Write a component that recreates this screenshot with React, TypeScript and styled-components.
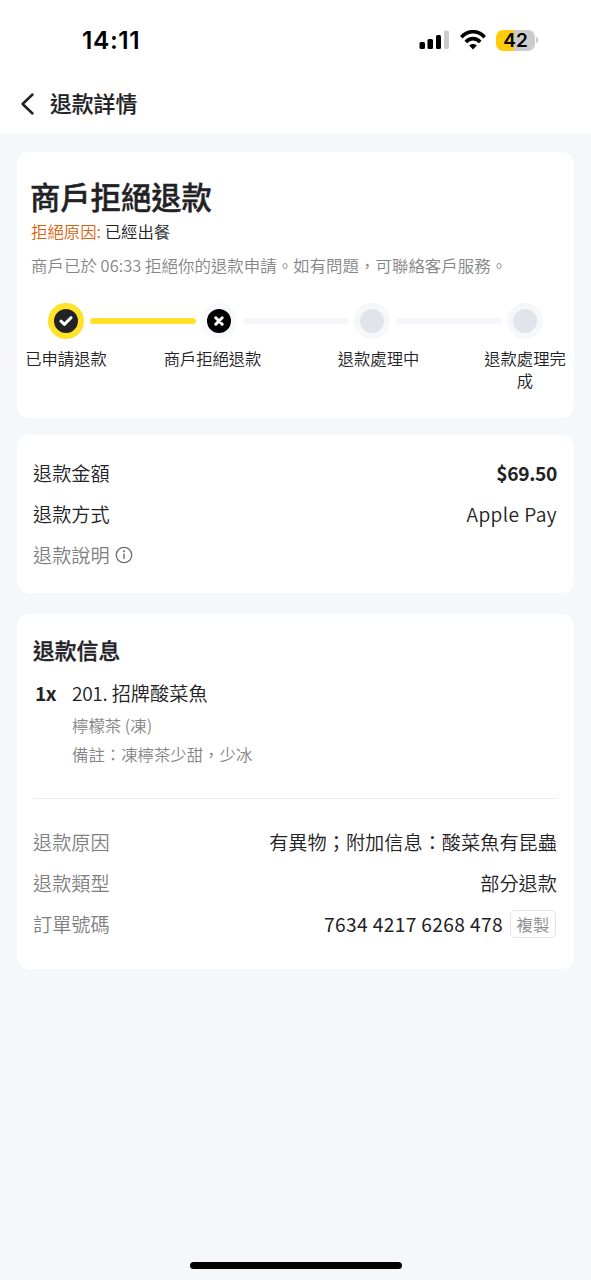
import React from "react";
import styled, { createGlobalStyle } from "styled-components";

const GlobalStyle = createGlobalStyle`
  * { box-sizing: border-box; }
  html, body { margin: 0; padding: 0; background: #f5f7fb; }
  body {
    font-family: "Noto Sans CJK TC", "Noto Sans", sans-serif;
    font-weight: 350;
    color: #222225;
  }
`;

const Screen = styled.div`
  width: 591px;
  height: 1280px;
  display: flex;
  flex-direction: column;
  background: #f5f7fb;
  overflow: hidden;
`;

const StatusBar = styled.div`
  height: 80px;
  flex: none;
  background: #fff;
  display: flex;
  align-items: center;
  justify-content: space-between;
  padding: 0 53px 0 82px;
`;

const Clock = styled.span`
  font-family: Inter, sans-serif;
  font-weight: 600;
  font-size: 24.5px;
  letter-spacing: 0.6px;
  line-height: 30px;
  color: #000;
`;

const StatusIcons = styled.div`
  display: flex;
  align-items: center;
`;

const SignalIcon = styled.svg`
  display: block;
  margin-right: 10px;
`;

const WifiIcon = styled.svg`
  display: block;
  margin-right: 10px;
`;

const Battery = styled.div`
  width: 39px;
  height: 21px;
  border-radius: 7px;
  background: linear-gradient(90deg, #ffcc0a 0 18px, #cbcbcd 18px);
  color: #000;
  font: 600 19px/21px Inter, sans-serif;
  text-align: center;
`;

const BatteryTip = styled.div`
  width: 2px;
  height: 6px;
  margin-left: 1px;
  border-radius: 0 2px 2px 0;
  background: #cbcbcd;
`;

const NavBar = styled.header`
  height: 54px;
  flex: none;
  background: #fff;
  display: flex;
  align-items: center;
  padding: 0 0 6px 20px;
`;

const BackIcon = styled.svg`
  display: block;
  margin-right: 14px;
`;

const NavTitle = styled.h1`
  margin: -2px 0 0;
  font-size: 21.8px;
  line-height: 32px;
  font-weight: 500;
  -webkit-text-stroke: 0.2px currentColor;
`;

const Content = styled.main`
  flex: 1;
  padding: 18px 17px 0;
`;

const Card = styled.section<{ $height: number; $gap?: number }>`
  height: ${(p) => p.$height}px;
  margin-bottom: ${(p) => p.$gap ?? 0}px;
  background: #fff;
  border-radius: 12px;
`;

const StatusHeading = styled.h2`
  margin: 0;
  padding: 24px 0 0 13px;
  font-size: 30.3px;
  line-height: 40px;
  font-weight: 500;
  -webkit-text-stroke: 0.45px currentColor;
`;

const Reason = styled.p`
  margin: 3px 0 0 14px;
  font-size: 16.4px;
  line-height: 24px;
`;

const ReasonLabel = styled.span`
  color: #d9640f;
`;

const Description = styled.p`
  margin: 10px 0 0 14px;
  font-size: 16.4px;
  letter-spacing: 0.07px;
  line-height: 24px;
  color: #858587;
  white-space: nowrap;
`;

const Track = styled.div`
  display: flex;
  align-items: center;
  margin: 26px 0 0 31px;
`;

const Dot = styled.div<{ $ring: string; $fill: string }>`
  width: 36px;
  height: 36px;
  flex: none;
  border-radius: 50%;
  border: 6px solid ${(p) => p.$ring};
  background: ${(p) => p.$fill};
  display: flex;
  align-items: center;
  justify-content: center;
`;

const Connector = styled.div<{ $color: string }>`
  width: 106px;
  height: 6px;
  margin: 0 5px 0 6px;
  border-radius: 3px;
  flex: none;
  background: ${(p) => p.$color};
`;

const StepLabels = styled.div`
  display: grid;
  grid-template-columns: 98px 195px 137px 1fr;
  margin-top: 8px;
`;

const StepLabel = styled.div`
  font-size: 16.3px;
  line-height: 22px;
  text-align: center;
`;

const LastStepLabel = styled(StepLabel)`
  width: 84px;
  margin-left: 36px;
`;

const Rows = styled.div<{ $top: number }>`
  padding: ${(p) => p.$top}px 17px 0 16px;
`;

const Row = styled.div<{ $muted?: boolean }>`
  height: 41px;
  display: flex;
  align-items: center;
  justify-content: space-between;
  font-size: 19.2px;
  line-height: 28px;
  color: ${(p) => (p.$muted ? "#7f7f82" : "#222225")};
`;

const Value = styled.span<{ $weight?: number; $spacing?: number }>`
  color: #222225;
  font-weight: ${(p) => p.$weight ?? 350};
  letter-spacing: ${(p) => p.$spacing ?? 0}px;
`;

const InfoLabel = styled.span`
  display: flex;
  align-items: center;
  gap: 5px;
`;

const SectionTitle = styled.h3`
  margin: 0;
  padding: 20px 0 0 16px;
  font-size: 21.8px;
  line-height: 32px;
  font-weight: 500;
  -webkit-text-stroke: 0.35px currentColor;
`;

const Item = styled.div`
  display: grid;
  grid-template-columns: 37px 1fr;
  padding: 13px 0 0 18px;
`;

const Quantity = styled.span`
  font-size: 19.2px;
  line-height: 28px;
  font-weight: 700;
  letter-spacing: -0.6px;
`;

const ItemName = styled.div`
  font-size: 19.2px;
  line-height: 28px;
`;

const ItemCode = styled.span`
  letter-spacing: -0.35px;
`;

const ItemNote = styled.div<{ $top: number }>`
  margin-top: ${(p) => p.$top}px;
  font-size: 16.4px;
  line-height: 24px;
  color: #858587;
`;

const Divider = styled.hr`
  margin: 32px 16px 0 16px;
  border: 0;
  height: 1px;
  background: #ededef;
`;

const OrderNumber = styled.div`
  display: flex;
  align-items: center;
  gap: 7px;
`;

const CopyButton = styled.button`
  width: 46px;
  height: 28px;
  padding: 0;
  margin: 1px 1px 0 0;
  border: 1px solid #e4e4e6;
  border-radius: 5px;
  background: #fff;
  color: #8b8b8e;
  font: 350 16.4px/24px "Noto Sans CJK TC", sans-serif;
`;

const HomeIndicator = styled.div`
  width: 212px;
  height: 7px;
  flex: none;
  margin: 0 0 11px 190px;
  border-radius: 4px;
  background: #000;
`;

export default function App() {
  return (
    <Screen>
      <GlobalStyle />
      <StatusBar>
        <Clock>14:11</Clock>
        <StatusIcons>
          <SignalIcon width="31" height="20" viewBox="0 0 31 20">
            <rect x="0.5" y="12" width="5.5" height="7" rx="1.5" />
            <rect x="8.5" y="9" width="5.5" height="10" rx="1.5" />
            <rect x="17" y="5" width="5" height="14" rx="1.5" />
            <rect x="25" y="0.5" width="5" height="18.5" rx="1.5" fill="#cbcbcd" />
          </SignalIcon>
          <WifiIcon width="26" height="20" viewBox="0 0 26 20">
            <g fill="none" stroke="#000" strokeWidth="3.6">
              <path d="M1.3 7.2C8-.1 18-.1 24.7 7.2" />
              <path d="M5.8 11.9c4.1-4.4 10.3-4.4 14.4 0" />
            </g>
            <path d="M13 19.4l-3.8-4c2.1-2 5.5-2 7.6 0z" />
          </WifiIcon>
          <Battery>42</Battery>
          <BatteryTip />
        </StatusIcons>
      </StatusBar>
      <NavBar>
        <BackIcon width="16" height="24" viewBox="0 0 16 24">
          <path d="M12.5 2.5L2.6 12l9.9 9.5" fill="none" stroke="#222225" strokeWidth="2.5" strokeLinecap="round" strokeLinejoin="round" />
        </BackIcon>
        <NavTitle>退款詳情</NavTitle>
      </NavBar>
      <Content>
        <Card $height={266} $gap={17}>
          <StatusHeading>商戶拒絕退款</StatusHeading>
          <Reason>
            <ReasonLabel>拒絕原因:</ReasonLabel> 已經出餐
          </Reason>
          <Description>商戶已於 06:33 拒絕你的退款申請。如有問題，可聯絡客戶服務。</Description>
          <Track>
            <Dot $ring="#ffe329" $fill="#222225">
              <svg width="14" height="12" viewBox="0 0 14 12">
                <path d="M2 6.2l3.4 3.2L12 2.7" fill="none" stroke="#fff" strokeWidth="3" strokeLinecap="round" strokeLinejoin="round" />
              </svg>
            </Dot>
            <Connector $color="#ffe329" />
            <Dot $ring="#f8f9fc" $fill="#000">
              <svg width="10" height="10" viewBox="0 0 10 10">
                <path d="M1.8 1.8l6.4 6.4M8.2 1.8L1.8 8.2" fill="none" stroke="#fff" strokeWidth="3" strokeLinecap="round" />
              </svg>
            </Dot>
            <Connector $color="#f5f6f9" />
            <Dot $ring="#f6f7fa" $fill="#e3e4ea" />
            <Connector $color="#f5f6f9" />
            <Dot $ring="#f6f7fa" $fill="#e3e4ea" />
          </Track>
          <StepLabels>
            <StepLabel>已申請退款</StepLabel>
            <StepLabel>商戶拒絕退款</StepLabel>
            <StepLabel>退款處理中</StepLabel>
            <LastStepLabel>退款處理完成</LastStepLabel>
          </StepLabels>
        </Card>
        <Card $height={158} $gap={21}>
          <Rows $top={17}>
            <Row>
              退款金額<Value $weight={700} $spacing={-0.35}>$69.50</Value>
            </Row>
            <Row>
              退款方式<Value $spacing={0.4}>Apple Pay</Value>
            </Row>
            <Row $muted>
              <InfoLabel>
                退款說明
                <svg width="18" height="18" viewBox="0 0 18 18">
                  <circle cx="9" cy="9" r="7.7" fill="none" stroke="#6f6f72" strokeWidth="1.3" />
                  <path d="M9 7.5v5.5" stroke="#6f6f72" strokeWidth="1.4" />
                  <circle cx="9" cy="5.2" r="1" fill="#6f6f72" />
                </svg>
              </InfoLabel>
            </Row>
          </Rows>
        </Card>
        <Card $height={355}>
          <SectionTitle>退款信息</SectionTitle>
          <Item>
            <Quantity>1x</Quantity>
            <div>
              <ItemName><ItemCode>201.</ItemCode> 招牌酸菜魚</ItemName>
              <ItemNote $top={6}>檸檬茶 (凍)</ItemNote>
              <ItemNote $top={5}>備註：凍檸茶少甜，少冰</ItemNote>
            </div>
          </Item>
          <Divider />
          <Rows $top={22}>
            <Row $muted>
              退款原因<Value>有異物；附加信息：酸菜魚有昆蟲</Value>
            </Row>
            <Row $muted>
              退款類型<Value>部分退款</Value>
            </Row>
            <Row $muted>
              訂單號碼
              <OrderNumber>
                <Value $weight={400} $spacing={0.35}>7634 4217 6268 478</Value>
                <CopyButton>複製</CopyButton>
              </OrderNumber>
            </Row>
          </Rows>
        </Card>
      </Content>
      <HomeIndicator />
    </Screen>
  );
}
